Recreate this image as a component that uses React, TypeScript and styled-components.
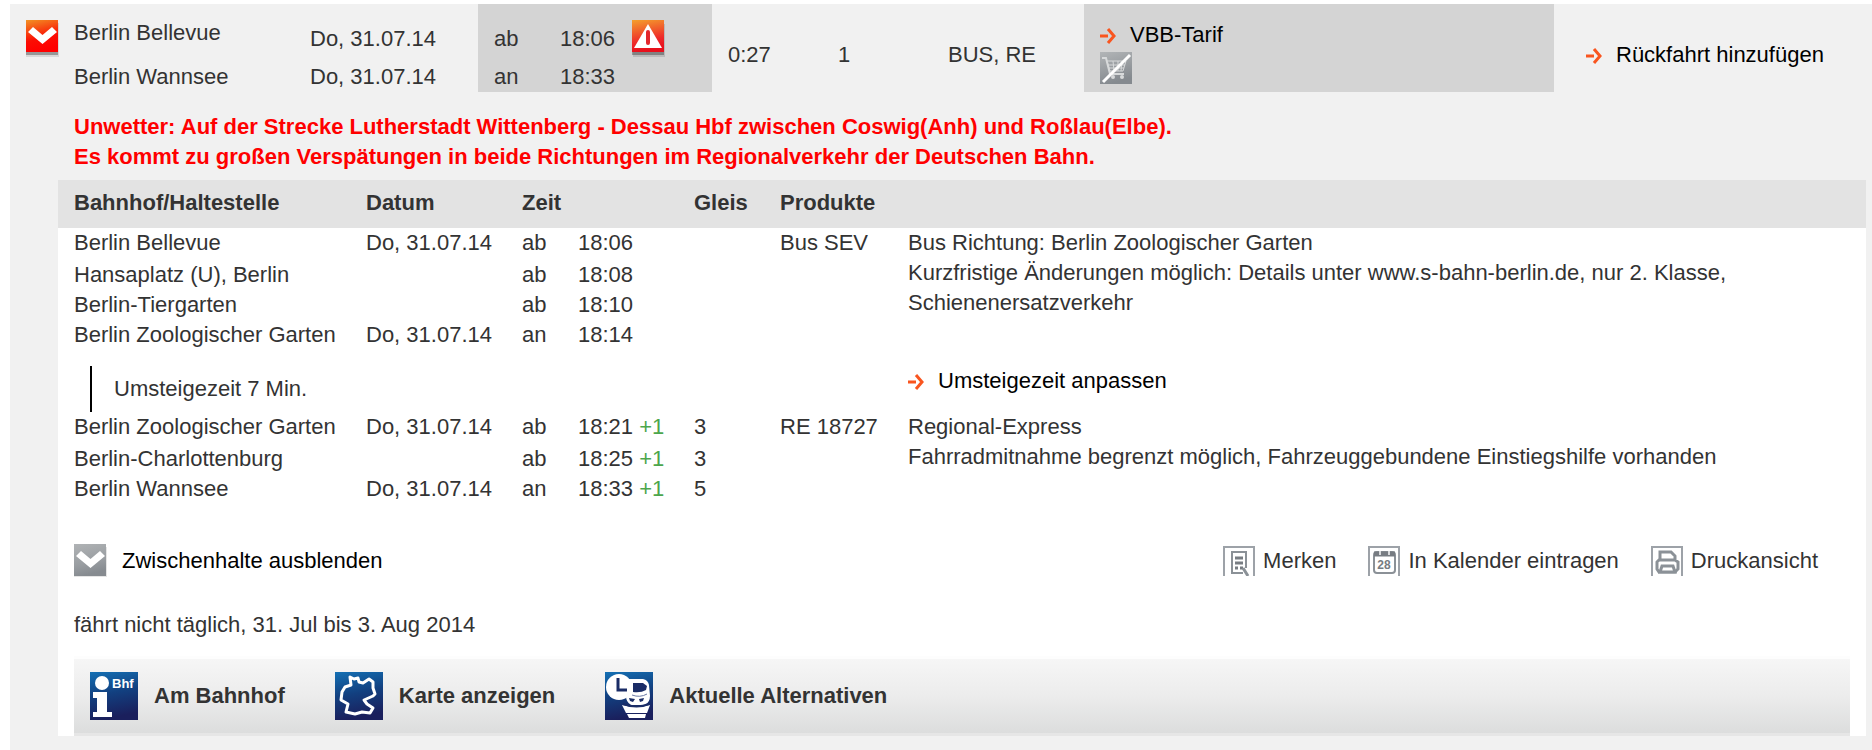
import React from "react";
import styled, { createGlobalStyle, css } from "styled-components";

const GlobalStyle = createGlobalStyle`
  body {
    margin: 0;
    background: #fff;
    color: #333;
    font: 22px/30px "Liberation Sans", Arial, Helvetica, sans-serif;
  }
  a { color: inherit; text-decoration: none; }
  svg { display: block; flex: none; }
`;

const Connection = styled.main`
  margin: 4px 0 0 10px;
  padding-bottom: 14px;
  background: #f1f1f1;
`;

const Summary = styled.header`
  display: grid;
  grid-template-columns: 300px 168px 234px 110px 110px 152px minmax(240px, 470px) 1fr;
  height: 88px;
`;

const SummaryCell = styled.div<{ $shaded?: boolean; $left?: number; $top?: number }>`
  box-sizing: border-box;
  padding: ${(p) => p.$top ?? 36}px 0 0 ${(p) => p.$left ?? 16}px;
  background: ${(p) => (p.$shaded ? "#d4d4d4" : "transparent")};
  white-space: nowrap;
`;

const Split = styled.div`
  display: flex;
  align-items: flex-start;
`;

const Stack = styled.div<{ $gap: number }>`
  display: grid;
  gap: ${(p) => p.$gap}px;
`;

const Times = styled.div`
  display: grid;
  grid-template-columns: 66px 72px;
  row-gap: 8px;
  padding-top: 4px;
`;

const plainButton = css`
  margin: 0;
  padding: 0;
  border: 0;
  background: none;
  color: #000;
  font: inherit;
  cursor: pointer;
`;

const ToggleButton = styled.button`
  ${plainButton}
  margin: 2px 14px 0 0;
`;

const TextButton = styled.button`
  ${plainButton}
  display: flex;
  align-items: center;
  gap: 14px;
`;

const ArrowAnchor = styled.a`
  display: inline-flex;
  align-items: center;
  gap: 14px;
  color: #000;
`;

const Warning = styled.p`
  margin: 0;
  padding: 20px 16px 8px 64px;
  color: #f00;
  font-weight: bold;
`;

const Details = styled.section`
  margin: 0 6px 0 48px;
  background: #fff;
`;

const StopTable = styled.table`
  width: 100%;
  table-layout: fixed;
  border-collapse: collapse;
`;

const HeadCell = styled.th<{ $indent?: boolean }>`
  height: 48px;
  padding: 0 0 2px ${(p) => (p.$indent ? 16 : 0)}px;
  box-sizing: border-box;
  background: #e3e3e3;
  text-align: left;
`;

const Cell = styled.td<{ $indent?: boolean; $first?: boolean }>`
  padding: 0 0 ${(p) => (p.$first ? 2 : 0)}px ${(p) => (p.$indent ? 16 : 0)}px;
  vertical-align: top;
`;

const TransferCell = styled.td<{ $indent?: boolean }>`
  padding: 16px 0 0 ${(p) => (p.$indent ? 32 : 0)}px;
  vertical-align: top;
`;

const TransferTime = styled.div`
  padding: 8px 0 8px 22px;
  border-left: 2px solid #000;
`;

const Delay = styled.span`
  color: #4ca64c;
`;

const Actions = styled.div`
  display: flex;
  align-items: flex-start;
  justify-content: space-between;
  padding: 40px 48px 0 16px;
`;

const Tools = styled.nav`
  display: flex;
  gap: 32px;
  padding-top: 2px;
`;

const Tool = styled.a`
  display: flex;
  gap: 8px;
`;

const Validity = styled.p`
  margin: 0;
  padding: 32px 16px 16px;
`;

const LinkBar = styled.nav`
  display: flex;
  gap: 50px;
  margin: 0 16px;
  padding: 13px 16px;
  border-top: 3px solid #fdfdfd;
  border-bottom: 3px solid #e6e6e6;
  background: linear-gradient(#f6f6f6, #ececec 50%, #dcdddd);
`;

const BarLink = styled.a`
  display: flex;
  align-items: center;
  gap: 16px;
  font-weight: bold;
`;

const Chevron = ({ red }: { red?: boolean }) => {
  const id = red ? "chevron-red" : "chevron-grey";
  const height = red ? 38 : 34;
  return (
    <svg width="34" height={height} viewBox={`0 0 34 ${height}`} aria-hidden="true">
      <defs>
        <linearGradient id={id} x1="0" y1="0" x2="0.25" y2="1">
          <stop offset="0" stopColor={red ? "#f29224" : "#b0b3b5"} />
          <stop offset="0.65" stopColor={red ? "#fb0d03" : "#999da1"} />
          <stop offset="1" stopColor={red ? "#f00" : "#868b90"} />
        </linearGradient>
      </defs>
      <rect y="3" width="33" height={height - 4} fill="#000" opacity="0.1" />
      <rect y="3" width="32" height={height - 6} fill="#000" opacity="0.3" />
      <rect width="32" height="32" fill={`url(#${id})`} />
      <path d="M2 12 7 7l9.500 8L26 7l5 5-14.500 12z" fill="#fff" />
    </svg>
  );
};

const Alert = () => (
  <svg width="34" height="38" viewBox="0 0 34 38" role="img" aria-label="Warnung">
    <defs>
      <linearGradient id="alert" x1="0" y1="0" x2="0.2" y2="1">
        <stop offset="0" stopColor="#f4a02c" />
        <stop offset="0.7" stopColor="#ee2a2a" />
        <stop offset="1" stopColor="#e8101c" />
      </linearGradient>
    </defs>
    <rect x="1" y="4" width="32" height="33" fill="#000" opacity="0.12" />
    <rect y="4" width="32" height="31" fill="#000" opacity="0.3" />
    <rect width="32" height="32" fill="url(#alert)" />
    <path d="M16 4 30 28H2z" fill="#fff" />
    <path d="M16 12v11" stroke="#e3262b" strokeWidth="4" strokeLinecap="round" />
  </svg>
);

const Arrow = () => (
  <svg width="16" height="18" viewBox="0 0 16 18" aria-hidden="true">
    <path d="M0 10h8M8 3l6 7-6 7" fill="none" stroke="#f9551f" strokeWidth="3" />
  </svg>
);

const NoCart = () => (
  <svg width="32" height="32" viewBox="0 0 32 32" role="img" aria-label="Nicht buchbar">
    <defs>
      <linearGradient id="cart" x1="0" y1="0" x2="0.3" y2="1">
        <stop offset="0" stopColor="#b2b5b7" />
        <stop offset="1" stopColor="#858a8f" />
      </linearGradient>
    </defs>
    <rect width="32" height="32" fill="url(#cart)" />
    <g fill="none" stroke="#d8dadb" strokeWidth="2">
      <path d="M2 6h4l4 16h14" />
      <path d="M7 9h19l-3 10H10zM8 13h17M9 16h15M13 9l1 10M18 9v10M22 9l-1 10" strokeWidth="1" />
    </g>
    <circle cx="13" cy="25" r="2" fill="#d8dadb" />
    <circle cx="22" cy="25" r="2" fill="#d8dadb" />
    <path d="M3 30 30 3" stroke="#fff" strokeWidth="3" />
  </svg>
);

const ToolFrame = ({ children }: { children: React.ReactNode }) => (
  <svg width="32" height="30" viewBox="0 0 32 30" aria-hidden="true">
    <path d="M1 30V1h30v29" fill="#fff" stroke="#9da2a8" strokeWidth="2" />
    <g fill="none" stroke="#8b9197" strokeWidth="2">{children}</g>
  </svg>
);

const NoteIcon = () => (
  <ToolFrame>
    <path d="M20 27H9V6h14v16" />
    <path d="M12 12h8M12 17h8M12 22h3M17 22h3" strokeWidth="3" stroke="#777c82" />
    <path d="m20 22 5 8" strokeWidth="3" />
  </ToolFrame>
);

const CalendarIcon = () => (
  <ToolFrame>
    <rect x="6" y="6" width="21" height="21" rx="3" />
    <path d="M6 8h21" strokeWidth="5" stroke="#777c82" />
    <path d="M12 5v4M21 5v4" stroke="#d8dadc" />
    <text x="16" y="23" textAnchor="middle" fontFamily="Liberation Sans, Arial, sans-serif" fontSize="12" fontWeight="bold" fill="#777c82" stroke="none">28</text>
  </ToolFrame>
);

const PrinterIcon = () => (
  <ToolFrame>
    <g strokeWidth="3">
      <path d="M9 14V6h11l4 4v4M6 23v-7l2-2h16l3 2v7l-3 3H8z" />
      <path d="M11 20h11l2 6H9z" fill="#fff" />
    </g>
  </ToolFrame>
);

const BlueTile = ({ id, children }: { id: string; children: React.ReactNode }) => (
  <svg width="48" height="48" viewBox="0 0 48 48" aria-hidden="true">
    <defs>
      <linearGradient id={id} x1="0" y1="0" x2="0.2" y2="1">
        <stop offset="0" stopColor="#1470b4" />
        <stop offset="0.5" stopColor="#124080" />
        <stop offset="1" stopColor="#1a1f5c" />
      </linearGradient>
    </defs>
    <rect width="48" height="48" fill={`url(#${id})`} />
    {children}
  </svg>
);

const StationIcon = () => (
  <BlueTile id="tile-station">
    <circle cx="12" cy="11" r="7" fill="#fff" />
    <path d="M3 20h14v20h5v5H3v-5h4V26H3z" fill="#fff" />
    <text x="22" y="16" fontFamily="Liberation Sans, Arial, sans-serif" fontSize="13" fontWeight="bold" fill="#fff">Bhf</text>
  </BlueTile>
);

const MapIcon = () => (
  <BlueTile id="tile-map">
    <path
      d="M15 5l4 2 4-1 1 4 4 1 6-4 4 3v6l2 6-2 2-9 4 3 4 6 4-3 5-8-1-7 2-9-2 2-8-7-4 1-8 3-5 6-2z"
      fill="none"
      stroke="#fff"
      strokeWidth="3"
      strokeLinejoin="round"
    />
  </BlueTile>
);

const AlternativesIcon = () => (
  <BlueTile id="tile-alternatives">
    <path d="M24 7h14q5 1 6 6l1 11q0 6-5 9H26q-5-3-5-9z" fill="#fff" />
    <path d="M17 33q14 4 28 0l-3 8H21z" fill="#fff" />
    <path d="M22 42h19l-1 4H24z" fill="#fff" />
    <path d="M28 11h10l4 3-1 4q-5 3-13 2z" fill="#1a2c66" />
    <path d="M27 23q8 3 15-1" fill="none" stroke="#6c7aa5" />
    <circle cx="14" cy="15" r="13" fill="#fff" />
    <path d="M13 6v12h9" fill="none" stroke="#1a2c66" strokeWidth="3" />
    <path d="m24 26 6 1-2 3-3-1zM39 26l-5 1 1 3 3-1z" fill="#1a2c66" />
    <path d="M18 32q14 5 26 0" fill="none" stroke="#1a2c66" strokeWidth="2" />
  </BlueTile>
);

const ArrowLink = ({ children }: { children: React.ReactNode }) => (
  <ArrowAnchor href="#">
    <Arrow />
    {children}
  </ArrowAnchor>
);

interface Stop {
  name: string;
  date?: string;
  kind: string;
  time: string;
  delay?: string;
  track?: string;
}

interface Leg {
  product: string;
  info: string[];
  stops: Stop[];
}

const DATE = "Do, 31.07.14";

const busLeg: Leg = {
  product: "Bus SEV",
  info: [
    "Bus Richtung: Berlin Zoologischer Garten",
    "Kurzfristige Änderungen möglich: Details unter www.s-bahn-berlin.de, nur 2. Klasse, Schienenersatzverkehr",
  ],
  stops: [
    { name: "Berlin Bellevue", date: DATE, kind: "ab", time: "18:06" },
    { name: "Hansaplatz (U), Berlin", kind: "ab", time: "18:08" },
    { name: "Berlin-Tiergarten", kind: "ab", time: "18:10" },
    { name: "Berlin Zoologischer Garten", date: DATE, kind: "an", time: "18:14" },
  ],
};

const trainLeg: Leg = {
  product: "RE 18727",
  info: ["Regional-Express", "Fahrradmitnahme begrenzt möglich, Fahrzeuggebundene Einstiegshilfe vorhanden"],
  stops: [
    { name: "Berlin Zoologischer Garten", date: DATE, kind: "ab", time: "18:21", delay: "+1", track: "3" },
    { name: "Berlin-Charlottenburg", kind: "ab", time: "18:25", delay: "+1", track: "3" },
    { name: "Berlin Wannsee", date: DATE, kind: "an", time: "18:33", delay: "+1", track: "5" },
  ],
};

const LegRows = ({ leg }: { leg: Leg }) => (
  <>
    {leg.stops.map((stop, i) => (
      <tr key={stop.name}>
        <Cell $indent $first={i === 0}>{stop.name}</Cell>
        <Cell>{stop.date}</Cell>
        <Cell>{stop.kind}</Cell>
        <Cell>
          {stop.time} {stop.delay && <Delay>{stop.delay}</Delay>}
        </Cell>
        <Cell>{stop.track}</Cell>
        {i === 0 && (
          <>
            <Cell rowSpan={leg.stops.length}>{leg.product}</Cell>
            <Cell rowSpan={leg.stops.length}>
              {leg.info.map((line) => (
                <div key={line}>{line}</div>
              ))}
            </Cell>
          </>
        )}
      </tr>
    ))}
  </>
);

const COLUMN_WIDTHS = [308, 156, 56, 116, 86, 128];

export default function App() {
  return (
    <>
      <GlobalStyle />
      <Connection>
        <Summary>
          <SummaryCell $top={14}>
            <Split>
              <ToggleButton type="button" aria-label="Details ausblenden">
                <Chevron red />
              </ToggleButton>
              <Stack $gap={14}>
                <span>Berlin Bellevue</span>
                <span>Berlin Wannsee</span>
              </Stack>
            </Split>
          </SummaryCell>
          <SummaryCell $left={0} $top={20}>
            <Stack $gap={8}>
              <span>{DATE}</span>
              <span>{DATE}</span>
            </Stack>
          </SummaryCell>
          <SummaryCell $shaded $top={16}>
            <Split>
              <Times>
                <span>ab</span>
                <span>18:06</span>
                <span>an</span>
                <span>18:33</span>
              </Times>
              <Alert />
            </Split>
          </SummaryCell>
          <SummaryCell>0:27</SummaryCell>
          <SummaryCell>1</SummaryCell>
          <SummaryCell>BUS, RE</SummaryCell>
          <SummaryCell $shaded $top={16}>
            <Stack $gap={2}>
              <ArrowLink>VBB-Tarif</ArrowLink>
              <NoCart />
            </Stack>
          </SummaryCell>
          <SummaryCell $left={32}>
            <ArrowLink>Rückfahrt hinzufügen</ArrowLink>
          </SummaryCell>
        </Summary>

        <Warning>
          Unwetter: Auf der Strecke Lutherstadt Wittenberg - Dessau Hbf zwischen Coswig(Anh) und Roßlau(Elbe).
          <br />
          Es kommt zu großen Verspätungen in beide Richtungen im Regionalverkehr der Deutschen Bahn.
        </Warning>

        <Details>
          <StopTable>
            <colgroup>
              {COLUMN_WIDTHS.map((width, i) => (
                <col key={i} width={width} />
              ))}
              <col />
            </colgroup>
            <thead>
              <tr>
                <HeadCell $indent>Bahnhof/Haltestelle</HeadCell>
                <HeadCell>Datum</HeadCell>
                <HeadCell colSpan={2}>Zeit</HeadCell>
                <HeadCell>Gleis</HeadCell>
                <HeadCell colSpan={2}>Produkte</HeadCell>
              </tr>
            </thead>
            <tbody>
              <LegRows leg={busLeg} />
              <tr>
                <TransferCell $indent colSpan={6}>
                  <TransferTime>Umsteigezeit 7 Min.</TransferTime>
                </TransferCell>
                <TransferCell>
                  <ArrowLink>Umsteigezeit anpassen</ArrowLink>
                </TransferCell>
              </tr>
              <LegRows leg={trainLeg} />
            </tbody>
          </StopTable>

          <Actions>
            <TextButton type="button">
              <Chevron />
              Zwischenhalte ausblenden
            </TextButton>
            <Tools>
              <Tool href="#">
                <NoteIcon />
                Merken
              </Tool>
              <Tool href="#">
                <CalendarIcon />
                In Kalender eintragen
              </Tool>
              <Tool href="#">
                <PrinterIcon />
                Druckansicht
              </Tool>
            </Tools>
          </Actions>

          <Validity>fährt nicht täglich, 31. Jul bis 3. Aug 2014</Validity>

          <LinkBar>
            <BarLink href="#">
              <StationIcon />
              Am Bahnhof
            </BarLink>
            <BarLink href="#">
              <MapIcon />
              Karte anzeigen
            </BarLink>
            <BarLink href="#">
              <AlternativesIcon />
              Aktuelle Alternativen
            </BarLink>
          </LinkBar>
        </Details>
      </Connection>
    </>
  );
}
